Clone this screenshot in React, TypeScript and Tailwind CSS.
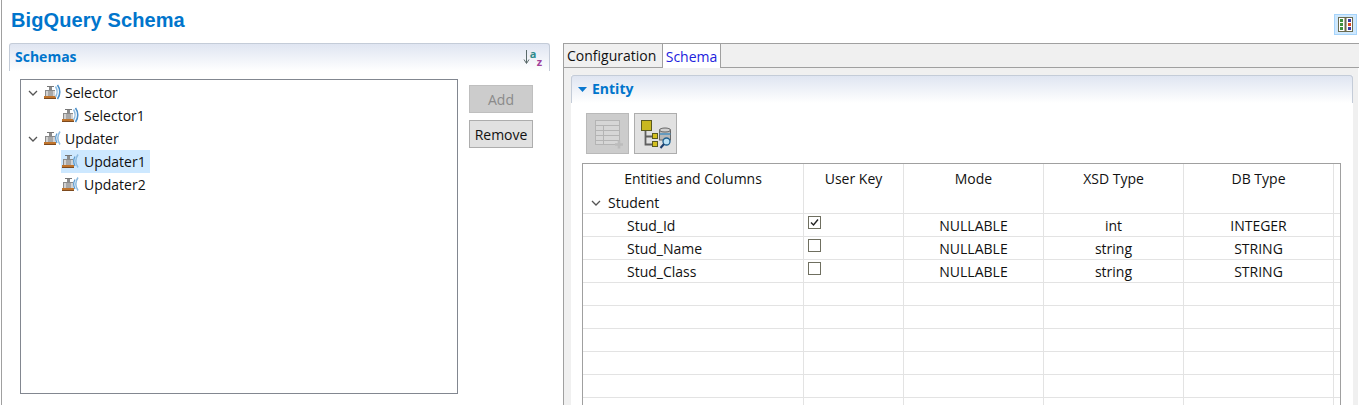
import React from "react";

function Faucet({ kind }: { kind: "out" | "in" }) {
  return (
    <svg width="17" height="17" viewBox="0 0 17 17" className="shrink-0">
      <rect x="3" y="2" width="7" height="1" fill="#777" />
      <rect x="5" y="3" width="3" height="3" fill="#8a8a8a" />
      <rect x="1" y="6" width="10" height="6" fill="#d2d2d2" />
      <rect x="1" y="6" width="1" height="6" fill="#8a8a8a" />
      <rect x="2" y="6" width="9" height="1" fill="#8a8a8a" />
      <rect x="4" y="7" width="5" height="5" fill="#a8a8a8" />
      <rect x="0" y="12" width="12" height="2" fill="#c0742c" />
      <rect x="0" y="14" width="12" height="1" fill="#7d4a1e" />
      {kind === "out" ? (
        <>
          <path d="M11.5 2.5 C13.5 5.5 13.5 10 11.5 13" fill="none" stroke="#8dbbe0" strokeWidth="1.5" />
          <path d="M13.5 1 C16.5 5 16.5 11 13.5 15" fill="none" stroke="#4a8fc9" strokeWidth="1.6" />
        </>
      ) : (
        <>
          <path d="M13 3.5 C11.3 6.5 11.3 10 13 13" fill="none" stroke="#5c9ace" strokeWidth="1.3" />
          <path d="M16 1.5 C13.3 5.5 13.3 10.5 16 14.5" fill="none" stroke="#8dbbe0" strokeWidth="1.5" />
        </>
      )}
    </svg>
  );
}

function Chevron() {
  return (
    <svg width="10" height="6" viewBox="0 0 10 6" className="shrink-0">
      <path d="M1 1 L5 5 L9 1" fill="none" stroke="#555" strokeWidth="1.3" />
    </svg>
  );
}

function TreeRow({ label, kind, child, selected }: { label: string; kind: "out" | "in"; child?: boolean; selected?: boolean }) {
  return (
    <div className="flex h-[23px] items-center">
      {child ? <div className="w-[40px] shrink-0" /> : (
        <div className="flex w-[23px] shrink-0 justify-start pl-[7px]"><Chevron /></div>
      )}
      <div className={`flex h-[23px] items-center pr-[4px] ${selected ? "bg-[#cde8ff]" : ""} ${child ? "pl-[1px]" : ""}`}>
        <Faucet kind={kind} />
        <span className={child ? "ml-[5px]" : "ml-[4px]"}>{label}</span>
      </div>
    </div>
  );
}

function Cell({ w, children, left, last }: { w: string; children?: React.ReactNode; left?: boolean; last?: boolean }) {
  return (
    <div className={`${w} flex h-full shrink-0 items-center pt-[2px] ${left ? "" : "justify-center"} ${last ? "" : "border-r border-[#e3e3e3]"}`}>
      {children}
    </div>
  );
}

function Check({ on }: { on?: boolean }) {
  return (
    <div className="mb-[8px] ml-[4px] flex h-[13px] w-[13px] items-center justify-center border border-[#6f6f60] bg-white">
      {on && (
        <svg width="11" height="11" viewBox="0 0 11 11">
          <path d="M2 5.5 L4.5 8 L9 2.5" fill="none" stroke="#222" strokeWidth="1.4" />
        </svg>
      )}
    </div>
  );
}

function Row({ name, on, mode, xsd, db }: { name?: string; on?: boolean; mode?: string; xsd?: string; db?: string }) {
  return (
    <div className="flex h-[23px] w-full items-center border-b border-[#e3e3e3]">
      <Cell w="w-[221px]" left>{name && <span className="ml-[44px]">{name}</span>}</Cell>
      <Cell w="w-[100px]" left>{name && <Check on={on} />}</Cell>
      <Cell w="w-[140px]">{mode}</Cell>
      <Cell w="w-[140px]">{xsd}</Cell>
      <Cell w="w-[150px]">{db}</Cell>
      <Cell w="w-[6px]" last />
    </div>
  );
}

export default function App() {
  return (
    <div className="ml-px flex h-[405px] w-[1358px] flex-col overflow-hidden border-l border-[#a0a0a0] bg-white text-[14px] leading-none text-[#111] [font-family:'Open_Sans','Noto_Sans',sans-serif]">
      <div className="flex h-[43px] shrink-0 items-start justify-between">
        <h1 className="ml-[9px] mt-[9px] text-[20px] font-bold leading-[22px] tracking-[0.1px] text-[#0075cc] [font-family:'Liberation_Sans',sans-serif]">BigQuery Schema</h1>
        <div className="mr-[2px] mt-[14px] flex h-[21px] w-[23px] items-center justify-center border border-[#a6d4fb] bg-[#cfe8fd]">
          <svg width="15" height="15" viewBox="0 0 15 15">
            <rect x="0.5" y="0.5" width="14" height="14" fill="#fff" stroke="#6b6b4f" />
            <rect x="6.5" y="0" width="2" height="15" fill="#6b6b4f" />
            <rect x="2" y="2" width="3" height="3" fill="#3f8f3f" />
            <rect x="2" y="6" width="3" height="3" fill="#3f8f3f" />
            <rect x="2" y="10" width="3" height="3" fill="#3f8f3f" />
            <rect x="10" y="2" width="3" height="3" fill="#3b3ba0" />
            <rect x="10" y="6" width="3" height="3" fill="#e04a20" />
            <rect x="10" y="10" width="3" height="3" fill="#3b3ba0" />
          </svg>
        </div>
      </div>

      <div className="flex min-h-0 flex-1">
        <div className="w-[561px] shrink-0 pl-[7px]">
          <div className="h-[362px] w-[541px]">
            <div className="flex h-[28px] items-center justify-between rounded-t-[3px] border-x border-t border-[#c4ccd8] bg-gradient-to-b from-[#dfe5f1] to-white pl-[5px] pr-[7px]">
              <span className="mb-[2px] text-[14px] font-bold text-[#0075cc]">Schemas</span>
              <div className="flex items-center">
                <svg width="7" height="15" viewBox="0 0 7 15"><path d="M3.5 0 V13 M1 9.5 L3.5 13.5 L6 9.5" fill="none" stroke="#5a6a6a" strokeWidth="1" /></svg>
                <div className="flex flex-col text-[11px] font-bold leading-[8px]">
                  <span className="text-[#2d8b8b]">a</span>
                  <span className="ml-[7px] text-[#a0409a]">z</span>
                </div>
              </div>
            </div>
            <div className="flex items-start pl-[11px] pt-[8px]">
              <div className="h-[315px] w-[438px] border border-[#828790] bg-white pt-[1px]">
                <TreeRow label="Selector" kind="out" />
                <TreeRow label="Selector1" kind="out" child />
                <TreeRow label="Updater" kind="in" />
                <TreeRow label="Updater1" kind="in" child selected />
                <TreeRow label="Updater2" kind="in" child />
              </div>
              <div className="ml-[11px] mt-[6px] flex w-[64px] flex-col gap-[7px]">
                <button className="h-[28px] border border-[#bfbfbf] bg-[#cccccc] pt-[2px] text-[#8a8a8a]">Add</button>
                <button className="h-[28px] border border-[#adadad] bg-[#e1e1e1] pt-[2px] text-[#111]">Remove</button>
              </div>
            </div>
          </div>
        </div>

        <div className="flex min-w-0 flex-1 flex-col">
          <div className="flex h-[25px] shrink-0 items-stretch border-b border-t border-[#a0a0a0] bg-[#f0f0f0]">
            <div className="flex w-[100px] items-center border-x border-[#a0a0a0] bg-[#f0f0f0] pl-[3px] pt-[1px]">Configuration</div>
            <div className="-mb-px flex w-[58px] items-center justify-center border-r border-[#a0a0a0] bg-white pt-[1px] text-[#2222dd]">Schema</div>
          </div>
          <div className="flex min-h-0 flex-1 border-l border-[#a0a0a0]">
            <div className="w-[7px] shrink-0 bg-[#f0f0f0]" />
            <div className="flex min-w-0 flex-1 flex-col">
              <div className="h-[7px] shrink-0 bg-[#f0f0f0]" />
              <div className="flex h-[28px] w-[782px] shrink-0 items-center rounded-t-[3px] border-x border-t border-[#c4ccd8] bg-gradient-to-b from-[#dfe5f1] to-white pl-[6px]">
                <svg width="9" height="5" viewBox="0 0 9 5" className="mr-[5px]"><path d="M0 0 H9 L4.5 5 Z" fill="#0a78cf" /></svg>
                <span className="mb-[2px] font-bold text-[#0075cc]">Entity</span>
              </div>
              <div className="ml-[15px] mt-[10px] flex gap-[5px]">
                <div className="flex h-[41px] w-[43px] items-center justify-center border border-[#b9b9b9] bg-[#cccccc]">
                  <svg width="32" height="32" viewBox="0 0 32 32">
                    <rect x="3.5" y="2.5" width="24" height="24" fill="#d6d6d6" stroke="#b4b4b4" />
                    <path d="M3.5 7.5 H27.5 M3.5 12.5 H27.5 M3.5 17.5 H27.5 M3.5 22.5 H27.5 M11.5 7.5 V26.5" fill="none" stroke="#b4b4b4" />
                    <path d="M23 26.5 H31 M27 22.5 V30.5" stroke="#bcbcbc" strokeWidth="2.6" />
                  </svg>
                </div>
                <div className="flex h-[41px] w-[43px] items-center justify-center border border-[#adadad] bg-[#e1e1e1]">
                  <svg width="32" height="32" viewBox="0 0 32 32">
                    <path d="M5.5 13 V26.5 H13 M5.5 18.5 H13" fill="none" stroke="#5f5f5f" strokeWidth="1.8" />
                    <rect x="1.5" y="2.5" width="10" height="10" fill="#c8b820" stroke="#5a5a20" />
                    <rect x="12.5" y="15.5" width="5" height="5" fill="#d4c020" stroke="#5a5a20" />
                    <rect x="12.5" y="23.5" width="5" height="5" fill="#d4c020" stroke="#5a5a20" />
                    <rect x="19.5" y="12" width="11" height="10" fill="#b8b8b8" stroke="#666" />
                    <ellipse cx="25" cy="12" rx="5.5" ry="2" fill="#d0d0d0" stroke="#666" />
                    <path d="M19.5 16 H30.5" stroke="#4a90c0" strokeWidth="1.5" />
                    <circle cx="26.5" cy="23.5" r="3.5" fill="#bfe3f5" stroke="#1d5f8f" strokeWidth="1.3" />
                    <path d="M24 26 L20.5 30" stroke="#1d3f6f" strokeWidth="2" />
                  </svg>
                </div>
              </div>
              <div className="ml-[11px] mt-[9px] h-[300px] w-[759px] border border-[#a0a0a0] bg-white">
                <div className="flex h-[27px] w-full">
                  <Cell w="w-[221px]">Entities and Columns</Cell>
                  <Cell w="w-[100px]">User Key</Cell>
                  <Cell w="w-[140px]">Mode</Cell>
                  <Cell w="w-[140px]">XSD Type</Cell>
                  <Cell w="w-[150px]">DB Type</Cell>
                  <Cell w="w-[6px]" last />
                </div>
                <div className="flex h-[23px] w-full items-center border-b border-[#e3e3e3]">
                  <Cell w="w-[221px]" left>
                    <span className="ml-[8px] mr-[7px]"><Chevron /></span>Student
                  </Cell>
                  <Cell w="w-[100px]" />
                  <Cell w="w-[140px]" />
                  <Cell w="w-[140px]" />
                  <Cell w="w-[150px]" />
                  <Cell w="w-[6px]" last />
                </div>
                <Row name="Stud_Id" on mode="NULLABLE" xsd="int" db="INTEGER" />
                <Row name="Stud_Name" mode="NULLABLE" xsd="string" db="STRING" />
                <Row name="Stud_Class" mode="NULLABLE" xsd="string" db="STRING" />
                <Row /><Row /><Row /><Row /><Row /><Row />
              </div>
            </div>
            <div className="w-[5px] shrink-0 bg-[#f0f0f0]" />
            <div className="w-[1px] shrink-0 bg-white" />
          </div>
        </div>
      </div>
    </div>
  );
}
